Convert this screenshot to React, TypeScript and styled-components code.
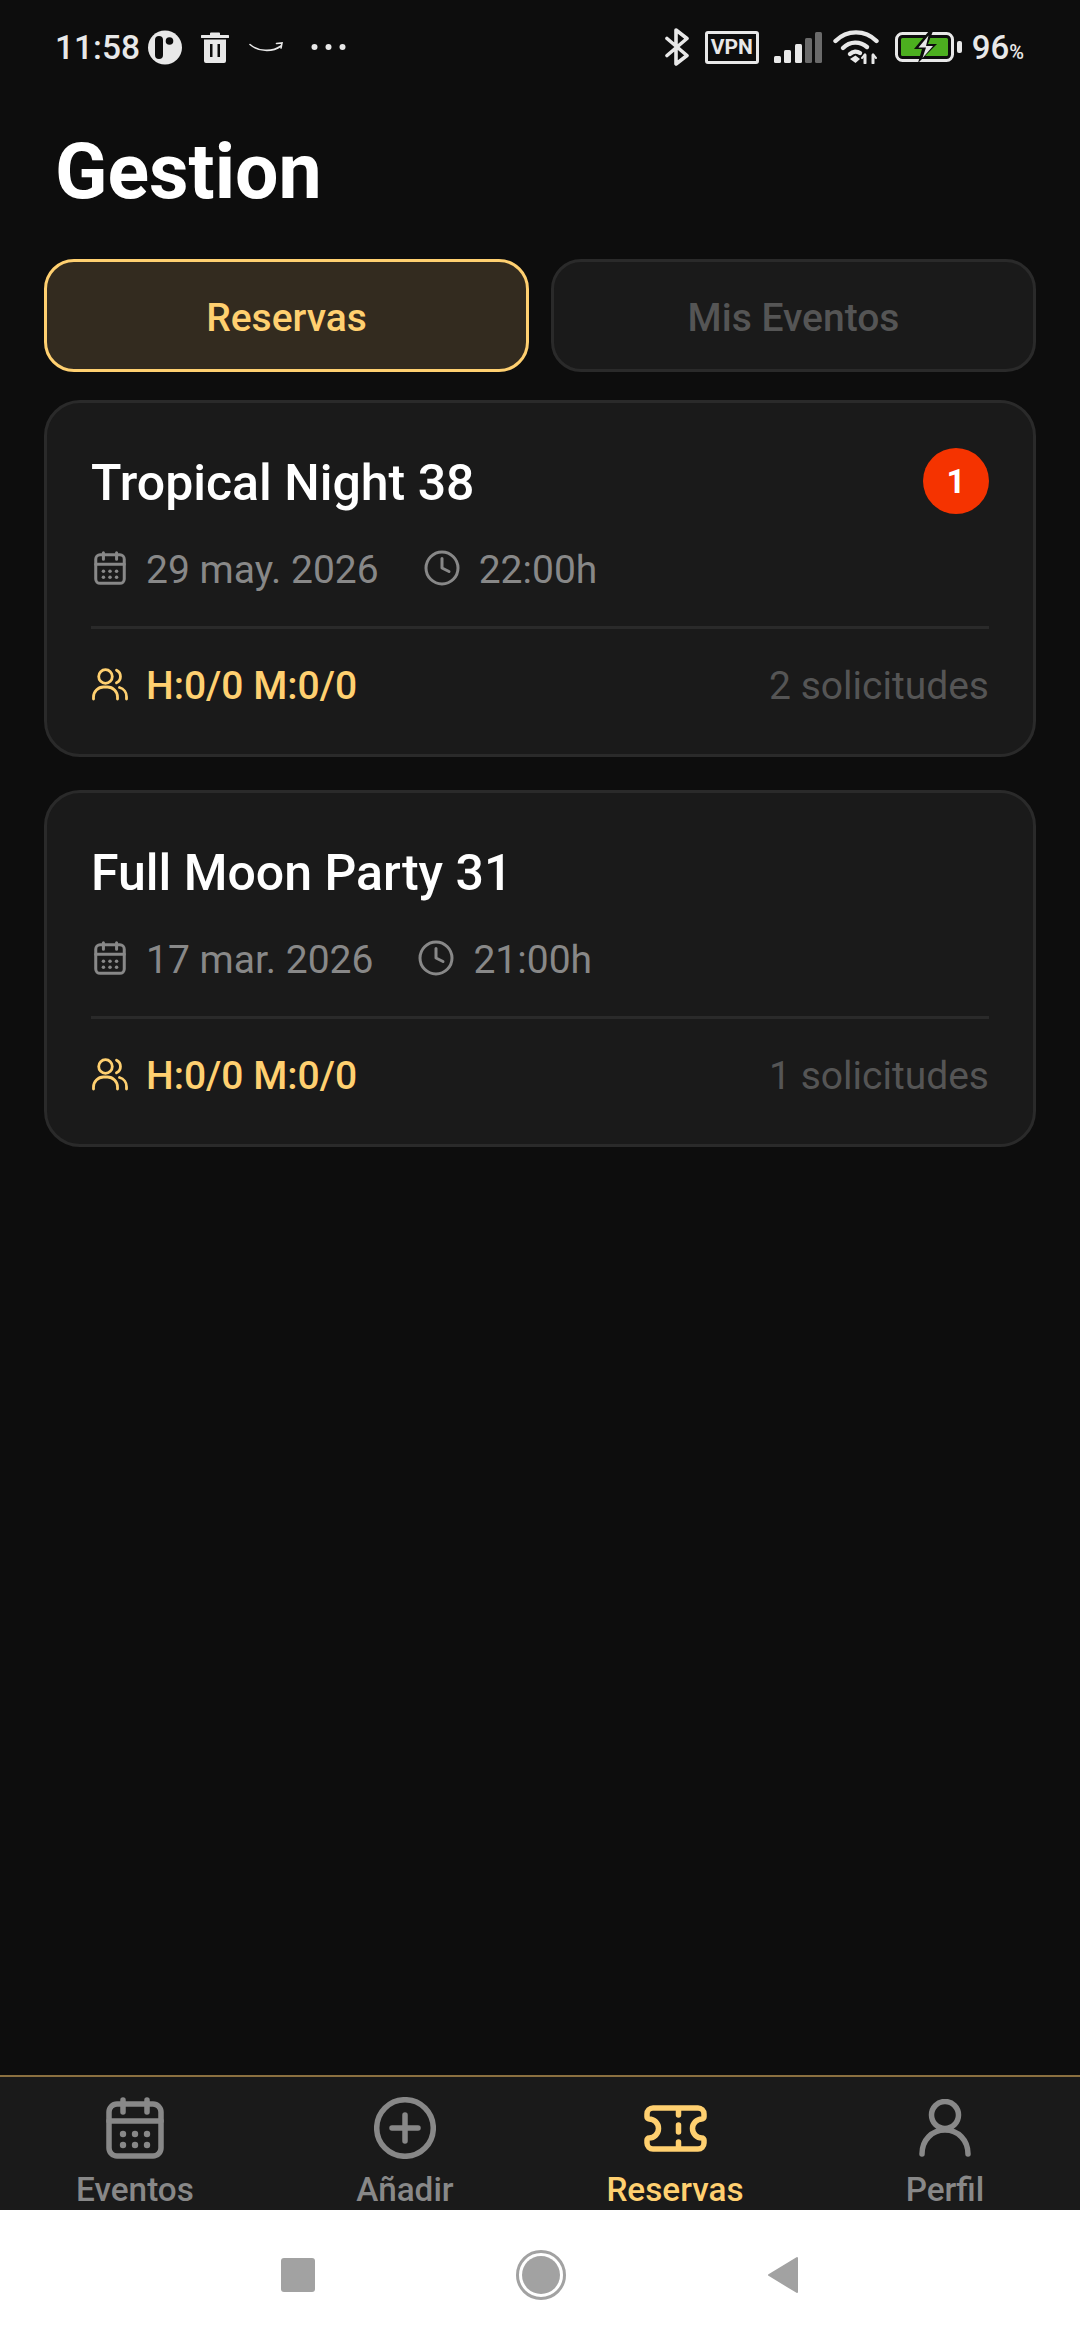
import React from "react"
import styled, { createGlobalStyle } from "styled-components"

const gold = "#ffd070"

const GlobalStyle = createGlobalStyle`
  html, body {
    margin: 0;
    padding: 0;
    background: #0d0d0d;
  }
  * {
    box-sizing: border-box;
  }
`

const Page = styled.div`
  width: 1080px;
  height: 2340px;
  display: flex;
  flex-direction: column;
  background: #0d0d0d;
  font-family: Roboto, "Liberation Sans", sans-serif;
  overflow: hidden;
`

const StatusBar = styled.div`
  height: 94px;
  padding: 0 56px 0 55px;
  display: flex;
  justify-content: space-between;
  align-items: center;
  color: #e8e8e8;
`

const StatusSide = styled.div`
  display: flex;
  align-items: center;
`

const Clock = styled.span`
  font-size: 33.5px;
  font-weight: 500;
  margin-right: 8px;
`

const Slot = styled.span<{ $gap: number }>`
  display: flex;
  margin-right: ${props => props.$gap}px;
`

const VpnBox = styled.span`
  width: 54px;
  height: 33px;
  border: 3.5px solid #e8e8e8;
  border-radius: 3px;
  margin-right: 15px;
  display: flex;
  align-items: center;
  justify-content: center;
  font-size: 21px;
  font-weight: 700;
`

const Battery = styled.span`
  font-size: 33px;
  font-weight: 500;
  margin-left: 10px;
`

const Percent = styled.span`
  font-size: 20px;
`

const Title = styled.h1`
  margin: 0;
  height: 165px;
  padding: 34px 0 0 55px;
  font-size: 77px;
  line-height: 88px;
  font-weight: 700;
  color: #fff;
`

const Tabs = styled.div`
  display: flex;
  gap: 22px;
  padding: 0 44px;
`

const Tab = styled.div<{ $active?: boolean }>`
  flex: 1;
  height: 113px;
  padding-top: 5px;
  border-radius: 30px;
  border: 3px solid ${props => (props.$active ? gold : "#2a2a2a")};
  background: ${props => (props.$active ? "#332b1f" : "#1a1a1a")};
  color: ${props => (props.$active ? gold : "#555")};
  display: flex;
  align-items: center;
  justify-content: center;
  font-size: 39px;
  font-weight: 500;
`

const Content = styled.main`
  flex: 1;
  display: flex;
  flex-direction: column;
  gap: 33px;
  padding: 28px 44px 0;
`

const Card = styled.article`
  height: 357px;
  padding: 45px 44px 0;
  background: #1a1a1a;
  border: 3px solid #2a2a2a;
  border-radius: 36px;
`

const CardHead = styled.div`
  height: 66px;
  display: flex;
  align-items: center;
  justify-content: space-between;
`

const EventName = styled.h2`
  margin: 0;
  padding-top: 3px;
  font-size: 50px;
  font-weight: 500;
  color: #fff;
`

const Badge = styled.span`
  width: 66px;
  height: 66px;
  border-radius: 50%;
  background: #f53300;
  color: #fff;
  font-size: 33px;
  font-weight: 700;
  display: flex;
  align-items: center;
  justify-content: center;
`

const Meta = styled.div`
  height: 44px;
  margin-top: 32px;
  display: flex;
  align-items: center;
  color: #888;
  font-size: 39px;
`

const IconSlot = styled.span<{ $inset: number; $gap: number }>`
  display: flex;
  align-items: center;
  padding-left: ${props => props.$inset}px;
  margin-right: ${props => props.$gap}px;
`

const MetaItem = styled.span`
  display: flex;
  align-items: center;
  margin-right: 45px;
`

const RowText = styled.span`
  padding-top: 3px;
`

const Divider = styled.div`
  height: 3px;
  margin-top: 36px;
  background: #2a2a2a;
`

const CardFoot = styled.div`
  height: 44px;
  margin-top: 33px;
  display: flex;
  align-items: center;
  justify-content: space-between;
`

const Capacity = styled.span`
  display: flex;
  align-items: center;
  color: ${gold};
  font-size: 39px;
  font-weight: 500;
`

const Requests = styled.span`
  padding-top: 3px;
  color: #555;
  font-size: 39px;
`

const BottomNav = styled.nav`
  height: 135px;
  border-top: 2px solid #8b7040;
  background: #1a1a1a;
  display: flex;
`

const NavItem = styled.div<{ $active?: boolean }>`
  flex: 1;
  padding-top: 20px;
  display: flex;
  flex-direction: column;
  align-items: center;
  color: ${props => (props.$active ? gold : "#888")};
`

const NavIcon = styled.span`
  height: 62px;
  display: flex;
  align-items: center;
`

const NavLabel = styled.span`
  margin-top: 11px;
  font-size: 33.3px;
  line-height: 39px;
  font-weight: 500;
`

const SystemBar = styled.div`
  height: 130px;
  background: #fff;
  display: flex;
  align-items: center;
  justify-content: center;
  gap: 201px;
`

const CalendarIcon = ({ width, height }: { width: number; height: number }) => (
  <svg width={width} height={height} viewBox="0 0 58 62" fill="none" stroke="currentColor" strokeWidth="5.5" strokeLinecap="round">
    <rect x="3" y="7" width="52" height="52" rx="8" />
    <path d="M3 24H55M17 3V15M41 3V15" />
    <g fill="currentColor" stroke="none">
      <circle cx="17" cy="37" r="3.2" />
      <circle cx="29" cy="37" r="3.2" />
      <circle cx="41" cy="37" r="3.2" />
      <circle cx="17" cy="48" r="3.2" />
      <circle cx="29" cy="48" r="3.2" />
      <circle cx="41" cy="48" r="3.2" />
    </g>
  </svg>
)

const ClockIcon = () => (
  <svg width="36" height="36" viewBox="0 0 36 36" fill="none" stroke="currentColor" strokeWidth="3" strokeLinecap="round" strokeLinejoin="round">
    <circle cx="18" cy="18" r="16" />
    <path d="M18 8.5V18L25 21.5" />
  </svg>
)

const UsersIcon = () => (
  <svg width="36" height="33" viewBox="0 0 36 33" fill="none" stroke={gold} strokeWidth="2.8" strokeLinecap="round">
    <circle cx="13.5" cy="8.5" r="6.8" />
    <path d="M1.5 31V29A10 10 0 0 1 11.5 19H15.5A10 10 0 0 1 25.5 29V31" />
    <path d="M24.5 2.2A7 7 0 0 1 24.5 14.8" />
    <path d="M27.5 19.5A9.5 9.5 0 0 1 34.5 29V31" />
  </svg>
)

const PlusIcon = () => (
  <svg width="62" height="62" viewBox="0 0 62 62" fill="none" stroke="currentColor" strokeWidth="5.5" strokeLinecap="round">
    <circle cx="31" cy="31" r="28.3" />
    <path d="M31 18V44M18 31H44" />
  </svg>
)

const TicketIcon = () => (
  <svg width="63" height="47" viewBox="0 0 63 47" fill="none" stroke="currentColor" strokeWidth="5.5" strokeLinecap="round" strokeLinejoin="round">
    <path d="M9 3H54A6 6 0 0 1 60 9V12A2 2 0 0 1 58 14A9.5 9.5 0 0 0 58 33A2 2 0 0 1 60 35V38A6 6 0 0 1 54 44H9A6 6 0 0 1 3 38V35A2 2 0 0 1 5 33A9.5 9.5 0 0 0 5 14A2 2 0 0 1 3 12V9A6 6 0 0 1 9 3Z" />
    <path d="M34.5 5V10M34.5 20V27M34.5 37V42" />
  </svg>
)

const PersonIcon = () => (
  <svg width="52" height="58" viewBox="0 0 52 58" fill="none" stroke="currentColor" strokeWidth="5.5" strokeLinecap="round">
    <circle cx="26" cy="16" r="13.5" />
    <path d="M3 55C3 41 13 31 26 31C39 31 49 41 49 55" />
  </svg>
)

const StatusIcons = {
  Moon: () => (
    <svg width="34" height="35" viewBox="0 0 34 35">
      <circle cx="17" cy="17.5" r="17" fill="#e8e8e8" />
      <rect x="7" y="6" width="8" height="23" rx="4" fill="#0d0d0d" />
      <circle cx="21.5" cy="11" r="3.8" fill="#0d0d0d" />
    </svg>
  ),
  Trash: () => (
    <svg width="28" height="31" viewBox="0 0 28 31" fill="#e8e8e8">
      <path d="M9 3V1.5A1 1 0 0 1 10 0.5H18A1 1 0 0 1 19 1.5V3H27A1 1 0 0 1 27 6H1A1 1 0 0 1 1 3Z" />
      <path fillRule="evenodd" d="M3 7.5H25V29A2 2 0 0 1 23 31H5A2 2 0 0 1 3 29ZM9 12V25H11.5V12ZM16.5 12V25H19V12Z" />
    </svg>
  ),
  Smile: () => (
    <svg width="34" height="11" viewBox="0 0 34 11" fill="none" stroke="#e8e8e8" strokeWidth="1.6" strokeLinecap="round">
      <path d="M1 2.5C9 9.5 23 10.5 32 4" />
      <path d="M27.5 1.5L33 1L32 6" />
    </svg>
  ),
  Dots: () => (
    <svg width="35" height="8" viewBox="0 0 35 8" fill="#e8e8e8">
      <circle cx="3.5" cy="4" r="3" />
      <circle cx="17.5" cy="4" r="3" />
      <circle cx="31.5" cy="4" r="3" />
    </svg>
  ),
  Bluetooth: () => (
    <svg width="24" height="38" viewBox="0 0 24 38" fill="none" stroke="#e8e8e8" strokeWidth="3.6" strokeLinecap="round" strokeLinejoin="round">
      <path d="M2 10.5L22 27.5L11 36V2L22 10.5L2 27.5" />
    </svg>
  ),
  Signal: () => (
    <svg width="48" height="31" viewBox="0 0 48 31">
      <rect x="0" y="24" width="7" height="7" rx="1.5" fill="#e8e8e8" />
      <rect x="10" y="18" width="7" height="13" rx="1.5" fill="#e8e8e8" />
      <rect x="21" y="12" width="7" height="19" rx="1.5" fill="#e8e8e8" />
      <rect x="31" y="6" width="7" height="25" rx="1.5" fill="#6a6a6a" />
      <rect x="41" y="0" width="7" height="31" rx="1.5" fill="#6a6a6a" />
    </svg>
  ),
  Wifi: () => (
    <svg width="46" height="34" viewBox="0 0 46 34" fill="none" stroke="#e8e8e8" strokeWidth="4.4" strokeLinecap="round">
      <path d="M2.5 11C14 -0.5 32 -0.5 43.5 11" />
      <path d="M10 18C17 11 27 11 34 17" />
      <path d="M17 24C20 21 24 21 27 23" />
      <path d="M17 29L22.5 25.5L27 29L22.5 33Z" fill="#e8e8e8" stroke="none" />
      <path d="M32 25V33M40 25V33" strokeWidth="3" />
      <path d="M29 28L32 24.5M40 24.5L43 28" strokeWidth="2" />
    </svg>
  ),
  Battery: () => (
    <svg width="67" height="30" viewBox="0 0 67 30" fill="none">
      <rect x="1.5" y="1.5" width="56" height="27" rx="6" stroke="#e8e8e8" strokeWidth="3" />
      <rect x="6" y="6" width="47" height="18" rx="1.5" fill="#4caf1f" />
      <rect x="62" y="9" width="5" height="12" rx="2" fill="#e8e8e8" />
      <path d="M34 -1L19 17H27L23 31L42 12H33L38 -1Z" fill="#0d0d0d" />
      <path d="M33.5 3.5L23.5 15.5H31L27.5 26L38 14H31Z" fill="#e8e8e8" />
    </svg>
  ),
}

const events = [
  { name: "Tropical Night 38", date: "29 may. 2026", time: "22:00h", requests: "2 solicitudes", unread: 1 },
  { name: "Full Moon Party 31", date: "17 mar. 2026", time: "21:00h", requests: "1 solicitudes", unread: 0 },
]

const App = () => (
  <Page>
    <GlobalStyle />
    <StatusBar>
      <StatusSide>
        <Clock>11:58</Clock>
        <Slot $gap={19}><StatusIcons.Moon /></Slot>
        <Slot $gap={20}><StatusIcons.Trash /></Slot>
        <Slot $gap={28}><StatusIcons.Smile /></Slot>
        <StatusIcons.Dots />
      </StatusSide>
      <StatusSide>
        <Slot $gap={16}><StatusIcons.Bluetooth /></Slot>
        <VpnBox>VPN</VpnBox>
        <Slot $gap={11}><StatusIcons.Signal /></Slot>
        <Slot $gap={16}><StatusIcons.Wifi /></Slot>
        <StatusIcons.Battery />
        <Battery>96<Percent>%</Percent></Battery>
      </StatusSide>
    </StatusBar>
    <Title>Gestion</Title>
    <Tabs>
      <Tab $active>Reservas</Tab>
      <Tab>Mis Eventos</Tab>
    </Tabs>
    <Content>
      {events.map(event => (
        <Card key={event.name}>
          <CardHead>
            <EventName>{event.name}</EventName>
            {event.unread > 0 && <Badge>{event.unread}</Badge>}
          </CardHead>
          <Meta>
            <MetaItem>
              <IconSlot $inset={3} $gap={20}><CalendarIcon width={32} height={34} /></IconSlot>
              <RowText>{event.date}</RowText>
            </MetaItem>
            <MetaItem>
              <IconSlot $inset={0} $gap={19}><ClockIcon /></IconSlot>
              <RowText>{event.time}</RowText>
            </MetaItem>
          </Meta>
          <Divider />
          <CardFoot>
            <Capacity>
              <IconSlot $inset={1} $gap={18}><UsersIcon /></IconSlot>
              <RowText>H:0/0 M:0/0</RowText>
            </Capacity>
            <Requests>{event.requests}</Requests>
          </CardFoot>
        </Card>
      ))}
    </Content>
    <BottomNav>
      <NavItem>
        <NavIcon><CalendarIcon width={58} height={62} /></NavIcon>
        <NavLabel>Eventos</NavLabel>
      </NavItem>
      <NavItem>
        <NavIcon><PlusIcon /></NavIcon>
        <NavLabel>Añadir</NavLabel>
      </NavItem>
      <NavItem $active>
        <NavIcon><TicketIcon /></NavIcon>
        <NavLabel>Reservas</NavLabel>
      </NavItem>
      <NavItem>
        <NavIcon><PersonIcon /></NavIcon>
        <NavLabel>Perfil</NavLabel>
      </NavItem>
    </BottomNav>
    <SystemBar>
      <svg width="34" height="34" viewBox="0 0 34 34">
        <rect width="34" height="34" rx="3" fill="#a2a2a2" />
      </svg>
      <svg width="50" height="50" viewBox="0 0 50 50">
        <circle cx="25" cy="25" r="23.5" fill="none" stroke="#a2a2a2" strokeWidth="3" />
        <circle cx="25" cy="25" r="19" fill="#a2a2a2" />
      </svg>
      <svg width="32" height="38" viewBox="0 0 32 38">
        <path d="M2 19L30 2V36Z" fill="#a2a2a2" stroke="#a2a2a2" strokeWidth="2" strokeLinejoin="round" />
      </svg>
    </SystemBar>
  </Page>
)

export default App
